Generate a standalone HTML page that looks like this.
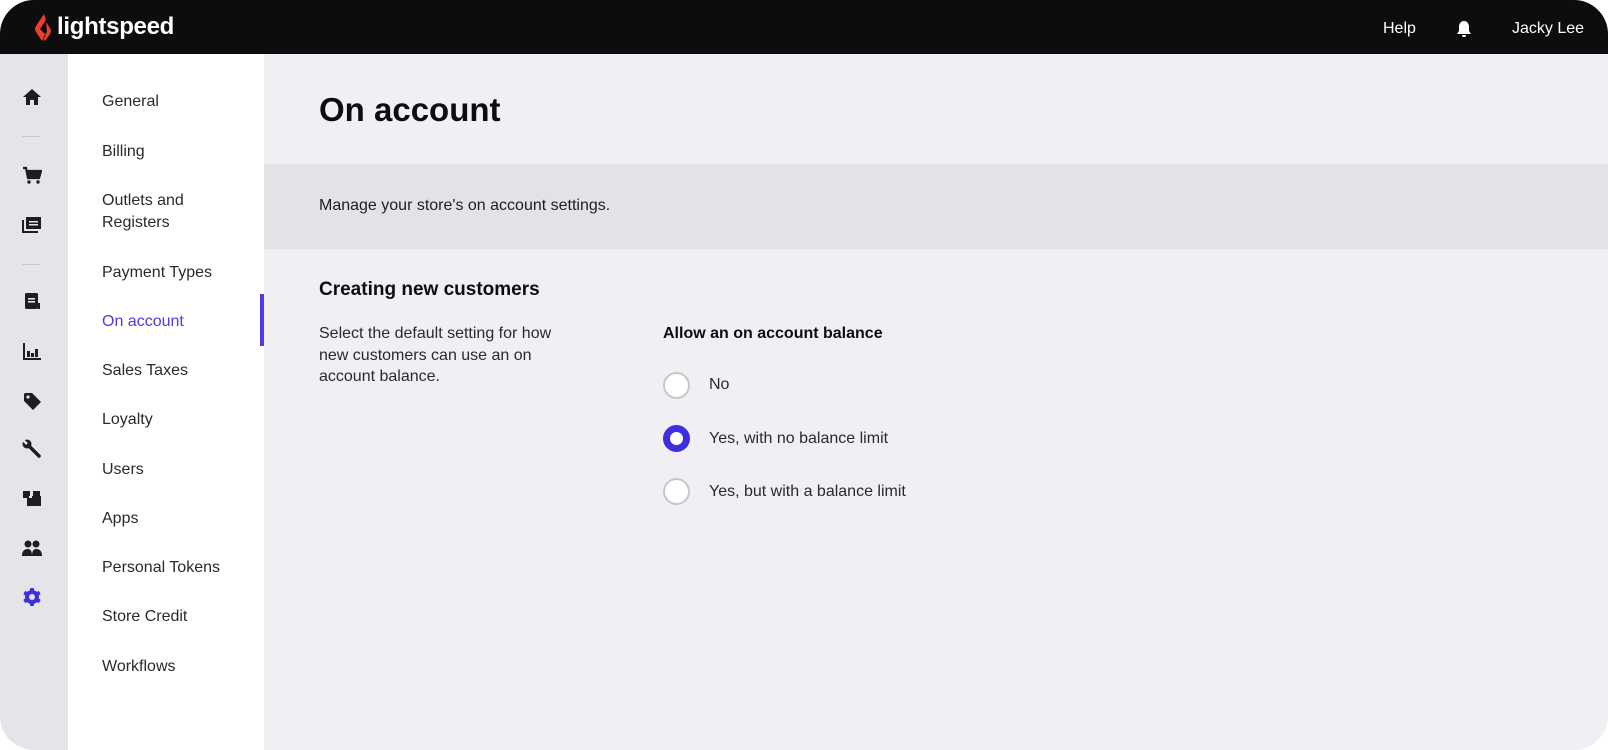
<!DOCTYPE html>
<html><head><meta charset="utf-8"><style>
*{margin:0;padding:0;box-sizing:border-box}
body{width:1608px;height:750px;background:#fff;font-family:"Liberation Sans",sans-serif;position:relative;overflow:hidden}
.app{position:absolute;left:0;top:0;width:1608px;height:750px;border-radius:34px;overflow:hidden;background:#f1eff3}
.top{position:absolute;left:0;top:0;width:1608px;height:54px;background:#0d0d0d;color:#fff}
.rail{position:absolute;left:0;top:54px;width:68px;height:700px;background:#e6e4e8}
.nav{position:absolute;left:68px;top:54px;width:196px;height:700px;background:#fff}
.t{position:absolute;white-space:nowrap}
.ni{position:absolute;left:34px;font-size:16px;color:#2a2a2a;line-height:22px}
.ic{position:absolute;left:22px;width:20px;height:20px}
.div{position:absolute;left:22px;width:18px;height:1px;background:#c9c7cc}
.radio{position:absolute;left:663px;width:27px;height:27px;border-radius:50%;background:#fff;border:2px solid #c8c6ca}
.radio.on{border:7px solid #3d2fe0;background:#fff}
.rl{position:absolute;left:709px;font-size:16px;color:#2a2a2a;line-height:20px}
</style></head><body>
<div class="app">
<div class="top">
<svg style="position:absolute;left:33px;top:13px" width="20" height="30" viewBox="0 0 20 30"><path d="M11 1 L3 13 Q1 16 3 19 L9 28 L13 22 L7 16 L13 7 Z M13 9 L17 15 Q19 18 17 21 L12 28 L10 25 L14 19 Z" fill="#e8402d"/></svg>
<div class="t" style="left:57px;top:13px;font-size:24px;font-weight:bold;letter-spacing:-0.3px">lightspeed</div>
<div class="t" style="left:1383px;top:20px;font-size:16px">Help</div>
<svg style="position:absolute;left:1456px;top:20px" width="16" height="18" viewBox="0 0 16 18"><path d="M8 1 C4.5 1 3 4 3 7 L3 11 L1 14 L15 14 L13 11 L13 7 C13 4 11.5 1 8 1 Z" fill="#fff"/><rect x="6" y="15" width="4" height="2" rx="1" fill="#fff"/></svg>
<div class="t" style="left:1512px;top:20px;font-size:16px">Jacky Lee</div>
</div>
<div class="rail">
<svg class="ic" style="top:33px" viewBox="0 0 20 20"><path d="M10 2 L1 10 H4 V18 H8 V13 H12 V18 H16 V10 H19 Z" fill="#1e1e1e"/></svg>
<div class="div" style="top:82px"></div>
<svg class="ic" style="top:111px" viewBox="0 0 20 20"><path d="M1 3 H4 L6 13 H17 L19 6 H5" fill="none" stroke="#1e1e1e" stroke-width="2.2"/><path d="M5 6 H19 L17 13 H6Z" fill="#1e1e1e"/><circle cx="7" cy="17" r="1.7" fill="#1e1e1e"/><circle cx="16" cy="17" r="1.7" fill="#1e1e1e"/></svg>
<svg class="ic" style="top:160px" viewBox="0 0 20 20"><rect x="4" y="3" width="15" height="12" fill="#1e1e1e"/><path d="M1 6 V18 H16" fill="none" stroke="#1e1e1e" stroke-width="2"/><rect x="7" y="7" width="9" height="1.5" fill="#e6e4e8"/><rect x="7" y="10" width="9" height="1.5" fill="#e6e4e8"/></svg>
<div class="div" style="top:210px"></div>
<svg class="ic" style="top:237px" viewBox="0 0 20 20"><rect x="3" y="2" width="13" height="16" rx="1.5" fill="#1e1e1e"/><rect x="6" y="7" width="7" height="1.6" fill="#e6e4e8"/><rect x="6" y="10" width="7" height="1.6" fill="#e6e4e8"/><path d="M17 12 V18" stroke="#1e1e1e" stroke-width="2"/></svg>
<svg class="ic" style="top:287px" viewBox="0 0 20 20"><path d="M2 2 V18 H19" fill="none" stroke="#1e1e1e" stroke-width="2"/><rect x="5" y="10" width="3" height="6" fill="#1e1e1e"/><rect x="9" y="12" width="3" height="4" fill="#1e1e1e"/><rect x="13" y="8" width="3" height="8" fill="#1e1e1e"/></svg>
<svg class="ic" style="top:337px" viewBox="0 0 20 20"><path d="M2 3 V10 L11 19 L19 11 L10 2 H3 Z" fill="#1e1e1e"/><circle cx="6" cy="6" r="1.6" fill="#e6e4e8"/></svg>
<svg class="ic" style="top:385px" viewBox="0 0 20 20"><path d="M4 4 L9 9 L17 17" stroke="#1e1e1e" stroke-width="3.5" stroke-linecap="round"/><circle cx="5" cy="5" r="4.5" fill="#1e1e1e"/><path d="M1 1 L5 5" stroke="#e6e4e8" stroke-width="2.5"/></svg>
<svg class="ic" style="top:434px" viewBox="0 0 20 20"><rect x="1" y="3" width="7" height="7" fill="#1e1e1e"/><rect x="11" y="3" width="7" height="6" fill="#1e1e1e"/><rect x="5" y="8" width="14" height="10" fill="#1e1e1e"/><rect x="7" y="8" width="3" height="2" fill="#e6e4e8"/></svg>
<svg class="ic" style="top:484px" viewBox="0 0 20 20"><circle cx="6" cy="6" r="3.5" fill="#1e1e1e"/><circle cx="14" cy="6" r="3.5" fill="#1e1e1e"/><path d="M0 18 Q0 11 6 11 Q10 11 10 18Z M10 18 Q10 11 14 11 Q20 11 20 18Z" fill="#1e1e1e"/></svg>
<svg class="ic" style="top:533px" viewBox="0 0 20 20"><g fill="#3d2fe0"><circle cx="10" cy="10" r="7"/><rect x="8" y="1" width="4" height="18" rx="1"/><rect x="8" y="1" width="4" height="18" rx="1" transform="rotate(60 10 10)"/><rect x="8" y="1" width="4" height="18" rx="1" transform="rotate(-60 10 10)"/></g><circle cx="10" cy="10" r="3" fill="#e6e4e8"/></svg>
</div>
<div class="nav">
<div class="ni" style="top:37px">General</div>
<div class="ni" style="top:87px">Billing</div>
<div class="ni" style="top:136px">Outlets and<br>Registers</div>
<div class="ni" style="top:208px">Payment Types</div>
<div class="ni" style="top:257px;color:#4b3bea">On account</div>
<div style="position:absolute;left:192px;top:240px;width:4px;height:52px;background:#4b3bea"></div>
<div class="ni" style="top:306px">Sales Taxes</div>
<div class="ni" style="top:355px">Loyalty</div>
<div class="ni" style="top:405px">Users</div>
<div class="ni" style="top:454px">Apps</div>
<div class="ni" style="top:503px">Personal Tokens</div>
<div class="ni" style="top:552px">Store Credit</div>
<div class="ni" style="top:602px">Workflows</div>
</div>
<div class="t" style="left:319px;top:91px;font-size:33px;font-weight:bold;color:#0d0d0d">On account</div>
<div style="position:absolute;left:264px;top:164px;width:1344px;height:85px;background:#e4e2e6"></div>
<div class="t" style="left:319px;top:197px;font-size:16px;color:#1e1e1e">Manage your store's on account settings.</div>
<div class="t" style="left:319px;top:279px;font-size:19px;font-weight:bold;color:#0d0d0d">Creating new customers</div>
<div class="t" style="left:319px;top:323px;font-size:16px;line-height:21.5px;color:#2a2a2a">Select the default setting for how<br>new customers can use an on<br>account balance.</div>
<div class="t" style="left:663px;top:325px;font-size:16px;font-weight:bold;color:#0d0d0d">Allow an on account balance</div>
<div class="radio" style="top:372px"></div><div class="rl" style="top:375px">No</div>
<div class="radio on" style="top:425px"></div><div class="rl" style="top:429px">Yes, with no balance limit</div>
<div class="radio" style="top:478px"></div><div class="rl" style="top:482px">Yes, but with a balance limit</div>
</div>
</body></html>
